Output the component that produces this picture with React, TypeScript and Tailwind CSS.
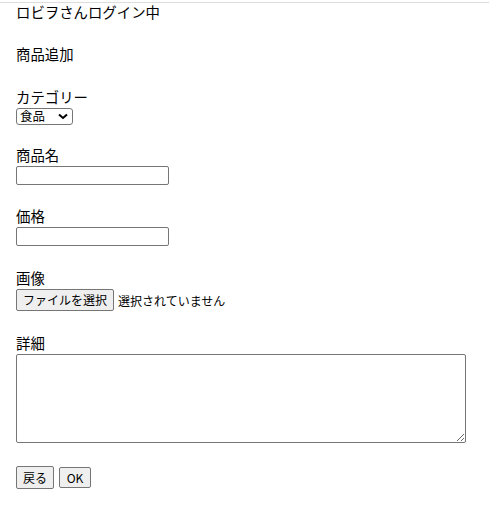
const App = () => {
  const font = { fontFamily: '"Noto Sans CJK JP", "Noto Sans", sans-serif' };

  return (
    <div className="min-h-[528px] bg-white text-black" style={font}>
      <div className="h-[2px]" />
      <div className="h-px bg-[#dcdcdc]" />
      <div className="pl-4 text-[14.4px] leading-[17px]">
        <div className="h-5">ロビヲさんログイン中</div>

        <h2 className="mt-[22px] h-5 font-normal">商品追加</h2>

        {/* カテゴリー */}
        <div className="mt-[23px] h-5">カテゴリー</div>
        <div className="flex h-[17px] w-[57px] items-center justify-between rounded-[3px] border border-[#767676] pl-[3px] pr-[4px] text-[12.5px] leading-none">
          <span>食品</span>
          <svg width="10" height="7" viewBox="0 0 10 7">
            <path d="M1 1.5 L5 5 L9 1.5" fill="none" stroke="#000" strokeWidth="2" />
          </svg>
        </div>

        {/* 商品名 */}
        <div className="mt-[21px] h-5">商品名</div>
        <input
          type="text"
          className="block h-[19px] w-[153px] rounded-[2px] border border-[#767676] bg-white px-[2px] text-[12px] outline-none"
        />

        {/* 価格 */}
        <div className="mt-[22px] h-5">価格</div>
        <input
          type="text"
          className="block h-[19px] w-[153px] rounded-[2px] border border-[#767676] bg-white px-[2px] text-[12px] outline-none"
        />

        {/* 画像 */}
        <div className="mt-[23px] h-5">画像</div>
        <div className="flex items-center gap-[4px] text-[12px]">
          <button className="h-[22px] w-[98px] rounded-[2px] border border-[#767676] bg-[#efefef] text-[12px] leading-none">
            ファイルを選択
          </button>
          <span>選択されていません</span>
        </div>

        {/* 詳細 */}
        <div className="mt-[23px] h-5">詳細</div>
        <textarea className="block h-[89px] w-[450px] rounded-[2px] border border-[#767676] bg-white p-[2px] text-[12px] outline-none" />

        <div className="mt-[23px] flex items-center gap-[5px] pb-10">
          <button className="h-[23px] w-[38px] rounded-[2px] border border-[#767676] bg-[#efefef] text-[12px] leading-none">
            戻る
          </button>
          <button className="h-[21px] w-[32px] rounded-[2px] border border-[#767676] bg-[#efefef] text-[12px] leading-none">
            OK
          </button>
        </div>
      </div>
    </div>
  );
};

export default App;
